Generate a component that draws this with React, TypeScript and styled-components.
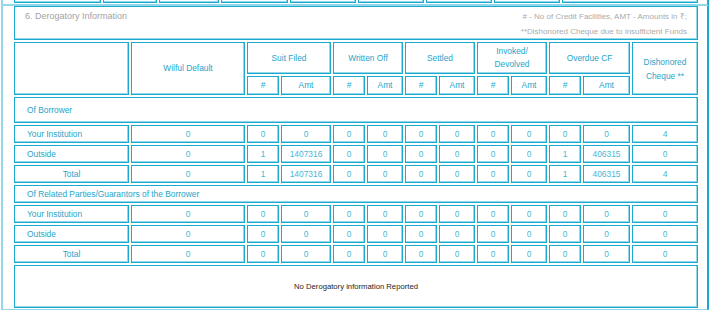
import React from 'react';
import styled, { createGlobalStyle, css } from 'styled-components';

const GlobalStyle = createGlobalStyle`
  html, body {
    margin: 0;
    padding: 0;
    background: #ffffff;
    font-family: "Liberation Sans", Arial, sans-serif;
  }
`;

const DARK = '#1aa9cf';
const LIGHT = '#93d8e8';

const Frame = styled.section`
  box-sizing: border-box;
  width: 708px;
  margin-left: 1px;
  padding: 0 9px 1px 11px;
  border-left: 2px solid ${LIGHT};
  border-right: 2px solid ${DARK};
  border-bottom: 2px solid ${LIGHT};
`;

const cellBox = css`
  box-sizing: border-box;
  border: 1px solid ${DARK};
  box-shadow: inset -1px -1px 0 ${LIGHT};
  background: #fff;
`;

const PrevStrip = styled.div`
  display: grid;
  grid-template-columns: 87px 54px 60px 67px 66px 66px 66px 66px 136px;
  column-gap: 2px;
  height: 3px;
  overflow: hidden;
`;

const PrevCell = styled.div`
  ${cellBox};
  height: 3px;
  border-top: none;
`;

const Grid = styled.div`
  display: grid;
  grid-template-columns: 115px 114px 32px 50px 32px 36px 32px 36px 32px 36px 32px 47px 66px;
  grid-template-rows: 34px 32px 19px 26px 18px 18px 18px 18px 18px 18px 18px 43px;
  gap: 2px;
`;

const TitleBox = styled.div`
  ${cellBox};
  grid-column: 1 / -1;
  display: flex;
  justify-content: space-between;
  align-items: flex-start;
  padding: 2px 10px 0 10px;
  color: #a3a3a3;
`;

const Title = styled.div`
  font-size: 9px;
  line-height: 15px;
`;

const Notes = styled.div`
  font-size: 8px;
  line-height: 15px;
  text-align: right;
  color: #ababab;
`;

const TwoLine = styled.span<{ $lh?: number }>`
  line-height: ${(p) => p.$lh ?? 13}px;
`;

const Cell = styled.div<{
  $align?: 'left' | 'center';
  $rows?: number;
  $cols?: number;
  $full?: boolean;
  $tone?: 'label' | 'value' | 'plain';
}>`
  ${cellBox};
  display: flex;
  align-items: center;
  justify-content: ${(p) => (p.$align === 'left' ? 'flex-start' : 'center')};
  text-align: ${(p) => (p.$align === 'left' ? 'left' : 'center')};
  padding: ${(p) => (p.$align === 'left' ? '0 0 0 12px' : '0 2px')};
  font-size: ${(p) => (p.$tone === 'plain' ? '7.7px' : '8.4px')};
  line-height: 13px;
  color: ${(p) =>
    p.$tone === 'value' ? '#45b8d6' : p.$tone === 'plain' ? '#1e1e1e' : '#1ea5ca'};
  ${(p) => p.$rows && `grid-row: span ${p.$rows};`}
  ${(p) => p.$cols && `grid-column: span ${p.$cols};`}
  ${(p) => p.$full && `grid-column: 1 / -1;`}
`;

type Row = { label: string; center?: boolean; values: (string | number)[] };

const borrower: Row[] = [
  { label: 'Your Institution', values: [0, 0, 0, 0, 0, 0, 0, 0, 0, 0, 0, 4] },
  { label: 'Outside', values: [0, 1, 1407316, 0, 0, 0, 0, 0, 0, 1, 406315, 0] },
  { label: 'Total', center: true, values: [0, 1, 1407316, 0, 0, 0, 0, 0, 0, 1, 406315, 4] },
];

const related: Row[] = [
  { label: 'Your Institution', values: [0, 0, 0, 0, 0, 0, 0, 0, 0, 0, 0, 0] },
  { label: 'Outside', values: [0, 0, 0, 0, 0, 0, 0, 0, 0, 0, 0, 0] },
  { label: 'Total', center: true, values: [0, 0, 0, 0, 0, 0, 0, 0, 0, 0, 0, 0] },
];

const groups = ['Suit Filed', 'Written Off', 'Settled', 'Invoked/ Devolved', 'Overdue CF'];

const DataRow: React.FC<{ row: Row }> = ({ row }) => (
  <>
    <Cell $align={row.center ? 'center' : 'left'}>{row.label}</Cell>
    {row.values.map((v, i) => (
      <Cell key={i} $tone="value">
        {v}
      </Cell>
    ))}
  </>
);

export default function App() {
  return (
    <>
      <GlobalStyle />
      <Frame>
        <PrevStrip>
          {Array.from({ length: 9 }).map((_, i) => (
            <PrevCell key={i} />
          ))}
        </PrevStrip>
      </Frame>
      <Frame>
        <Grid>
          <TitleBox>
            <Title>6. Derogatory Information</Title>
            <Notes>
              # - No of Credit Facilities, AMT - Amounts in ₹;
              <br />
              **Dishonored Cheque due to insufficient Funds
            </Notes>
          </TitleBox>

          <Cell $rows={2} />
          <Cell $rows={2}>Wilful Default</Cell>
          {groups.map((g) => (
            <Cell key={g} $cols={2}>
              {g === 'Invoked/ Devolved' ? (
                <TwoLine>
                  Invoked/
                  <br />
                  Devolved
                </TwoLine>
              ) : (
                g
              )}
            </Cell>
          ))}
          <Cell $rows={2}>
            <TwoLine $lh={14}>
              Dishonored
              <br />
              Cheque **
            </TwoLine>
          </Cell>
          {groups.map((g) => (
            <React.Fragment key={g}>
              <Cell>#</Cell>
              <Cell>Amt</Cell>
            </React.Fragment>
          ))}

          <Cell $full $align="left">Of Borrower</Cell>
          {borrower.map((r) => (
            <DataRow key={r.label} row={r} />
          ))}

          <Cell $full $align="left">Of Related Parties/Guarantors of the Borrower</Cell>
          {related.map((r) => (
            <DataRow key={r.label} row={r} />
          ))}

          <Cell $full $tone="plain">No Derogatory information Reported</Cell>
        </Grid>
      </Frame>
    </>
  );
}
